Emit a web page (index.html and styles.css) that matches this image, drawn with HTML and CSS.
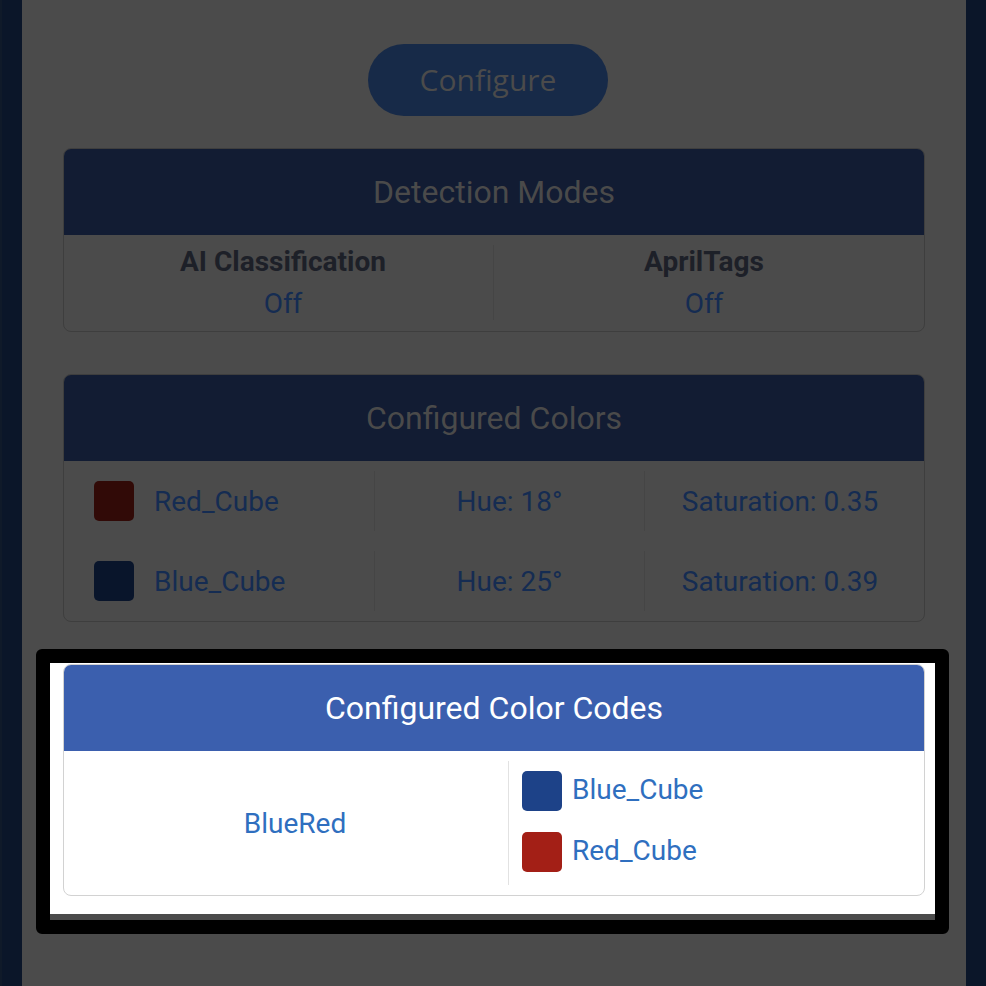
FILE: index.html
```html
<!DOCTYPE html>
<html lang="en">
<head>
<meta charset="utf-8">
<title>Vision Sensor Configuration</title>
<link rel="stylesheet" href="styles.css">
</head>
<body>
<div class="shell">
  <aside class="rail rail-left"></aside>
  <main class="content">
    <div class="actions">
      <button class="btn-configure" type="button">Configure</button>
    </div>

    <section class="card dim">
      <header class="card-head">Detection Modes</header>
      <div class="modes">
        <div class="mode mode-first">
          <div class="mode-label">AI Classification</div>
          <div class="mode-value">Off</div>
        </div>
        <div class="vdiv"></div>
        <div class="mode mode-last">
          <div class="mode-label">AprilTags</div>
          <div class="mode-value">Off</div>
        </div>
      </div>
    </section>

    <section class="card dim">
      <header class="card-head">Configured Colors</header>
      <div class="colors">
        <div class="color-row">
          <div class="c-name"><span class="sw sw-red-dim"></span>Red_Cube</div>
          <div class="c-hue">Hue: 18°</div>
          <div class="c-sat">Saturation: 0.35</div>
        </div>
        <div class="color-row">
          <div class="c-name"><span class="sw sw-blue-dim"></span>Blue_Cube</div>
          <div class="c-hue">Hue: 25°</div>
          <div class="c-sat">Saturation: 0.39</div>
        </div>
      </div>
    </section>

    <div class="spot">
      <section class="card lit">
        <header class="card-head">Configured Color Codes</header>
        <div class="codes">
          <div class="code-name">BlueRed</div>
          <div class="code-parts">
            <div class="part"><span class="sw sw-blue"></span><span class="part-name">Blue_Cube</span></div>
            <div class="part"><span class="sw sw-red"></span><span class="part-name">Red_Cube</span></div>
          </div>
        </div>
      </section>
    </div>
  </main>
  <aside class="rail rail-right"></aside>
</div>
</body>
</html>
```

FILE: styles.css
```css
* { box-sizing: border-box; }

html, body {
  margin: 0;
  padding: 0;
  background: #4b4b4b;
}

body {
  font-family: Roboto, "Liberation Sans", Arial, sans-serif;
  width: 986px;
  height: 986px;
  overflow: hidden;
}

.shell {
  display: flex;
  height: 986px;
}

.rail {
  width: 20px;
  flex: none;
  background: #0b1629;
}
.rail-left {
  width: 22px;
  border-left: 2px solid #101a29;
}

.content {
  flex: 1;
  padding: 44px 41px 0;
}

.actions {
  display: flex;
  justify-content: center;
  padding-right: 12px;
  margin-bottom: 32px;
}

.btn-configure {
  width: 240px;
  height: 72px;
  border: none;
  border-radius: 36px;
  background: #172a48;
  color: #4b4b4b;
  font-family: "Open Sans", "Noto Sans", sans-serif;
  font-size: 30px;
  padding: 0 0 2px;
}

.card {
  border: 1px solid #3e3e3e;
  border-radius: 8px;
  overflow: hidden;
  margin-bottom: 42px;
}

.card-head {
  height: 86px;
  display: flex;
  align-items: center;
  justify-content: center;
  font-size: 32px;
  background: #121c33;
  color: #4a4a4a;
}

/* Detection modes */
.modes {
  display: flex;
  padding: 6px 0;
}
.mode {
  flex: 1;
  text-align: center;
  line-height: 42px;
  font-size: 28px;
}
.mode-first { padding-left: 9px; }
.mode-last { padding-right: 10px; }
.mode-label {
  font-weight: 700;
  color: #1d2028;
}
.mode-value {
  color: #152c52;
}
.vdiv {
  width: 1px;
  background: #454545;
  margin: 4px 0 5px;
}

/* Configured colors */
.colors {
  padding: 10px 0;
  display: flex;
  flex-direction: column;
  gap: 20px;
}
.color-row {
  display: grid;
  grid-template-columns: 310px 270px 280px;
  height: 60px;
  font-size: 28px;
  color: #152c52;
}
.color-row > div {
  display: flex;
  align-items: center;
}
.c-name {
  padding-left: 30px;
  gap: 20px;
}
.c-hue, .c-sat {
  justify-content: center;
  border-left: 1px solid #454545;
}
.c-sat {
  padding-right: 9px;
}

.sw {
  width: 40px;
  height: 40px;
  border-radius: 5px;
  flex: none;
}
.sw-red-dim { background: #310a07; }
.sw-blue-dim { background: #09152b; }
.sw-red { background: #a31f16; }
.sw-blue { background: #1d4288; }

/* Spotlighted card */
.spot {
  position: relative;
  z-index: 0;
}
.spot::before {
  content: "";
  position: absolute;
  top: -15px;
  left: -27px;
  right: -24px;
  bottom: -38px;
  border: 14px solid #000;
  border-radius: 6px;
  background: linear-gradient(to bottom, #fff calc(100% - 6px), #4b4b4b calc(100% - 6px));
  z-index: -1;
}

.card.lit {
  border-color: #d2d2d2;
  background: #fff;
  margin-bottom: 0;
}
.card.lit .card-head {
  background: #3b5fae;
  color: #fff;
}

.codes {
  display: flex;
  padding: 10px 0;
  font-size: 28px;
  color: #2f6fbf;
}
.code-name {
  width: 444px;
  padding-left: 18px;
  display: flex;
  align-items: center;
  justify-content: center;
}
.code-parts {
  flex: 1;
  border-left: 1px solid #e2e2e2;
  padding: 10px 0 13px 13px;
  display: flex;
  flex-direction: column;
  gap: 21px;
}
.part {
  display: flex;
  align-items: center;
  gap: 10px;
  height: 40px;
}
.part-name {
  padding-bottom: 3px;
}
```
